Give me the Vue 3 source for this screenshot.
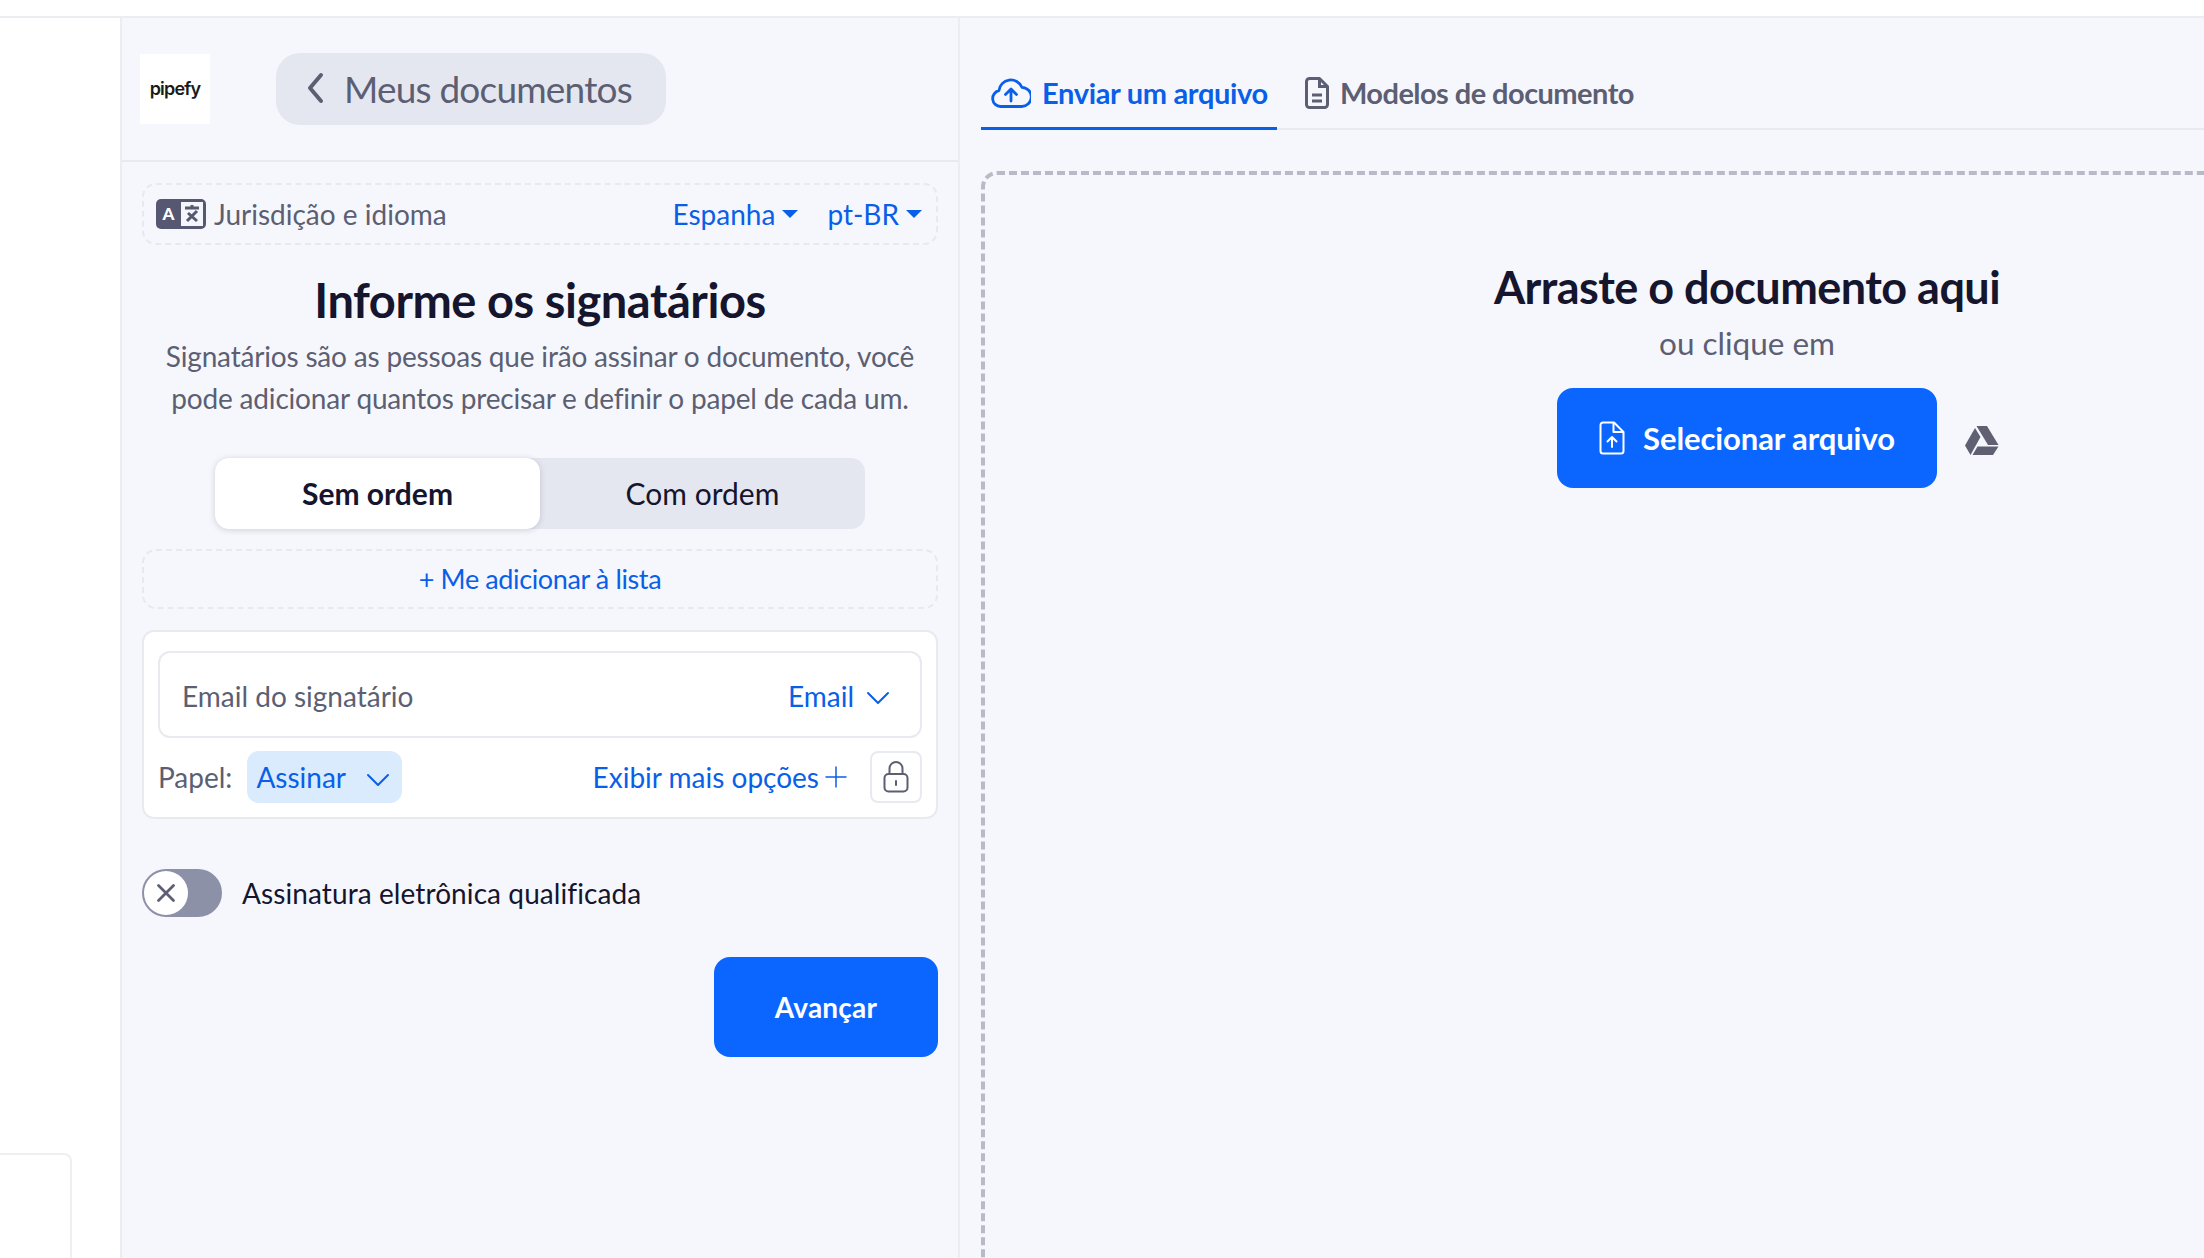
<script setup>
import { ref } from "vue";

const mode = ref("none");
const tab = ref("upload");
</script>

<template>
  <div class="page">
    <div class="topbar"></div>
    <div class="main">
      <aside class="sidebar">
        <div class="side-card"></div>
      </aside>

      <section class="panel">
        <header class="panel-head">
          <div class="logo">pipefy</div>
          <button class="back">
            <svg width="22" height="34" viewBox="0 0 22 34" fill="none">
              <path d="M17 4 6 17l11 13" stroke="#5c5f73" stroke-width="4" stroke-linecap="round" stroke-linejoin="round" />
            </svg>
            Meus documentos
          </button>
        </header>

        <div class="panel-body">
          <div class="jurisdiction">
            <svg class="translate" width="50" height="30" viewBox="0 0 50 30">
              <rect width="50" height="30" rx="5" fill="#555870" />
              <rect x="25" y="3" width="22" height="24" fill="#f5f6fb" />
              <text x="12.5" y="21" text-anchor="middle" font-family="Lato" font-weight="900" font-size="17" fill="#fff">A</text>
              <path d="M29 9h14M36 6v3M31 22l10-10M32 14l9 8" stroke="#555870" stroke-width="3" fill="none" />
            </svg>
            <span class="jur-label">Jurisdição e idioma</span>
            <span class="jur-select">Espanha<i class="caret"></i></span>
            <span class="jur-select second">pt-BR<i class="caret"></i></span>
          </div>

          <h1>Informe os signatários</h1>
          <p class="intro">
            Signatários são as pessoas que irão assinar o documento, você<br />
            pode adicionar quantos precisar e definir o papel de cada um.
          </p>

          <div class="segment">
            <button :class="{ on: mode === 'none' }" @click="mode = 'none'">Sem ordem</button>
            <button :class="{ on: mode === 'order' }" @click="mode = 'order'">Com ordem</button>
          </div>

          <div class="add-me">+ Me adicionar à lista</div>

          <div class="signer">
            <div class="email-field">
              <span class="placeholder">Email do signatário</span>
              <span class="email-type">
                Email
                <svg class="chev" width="24" height="14" viewBox="0 0 24 14" fill="none">
                  <path d="m2 2 10 10L22 2" stroke="#0a5fe8" stroke-width="2" stroke-linecap="round" stroke-linejoin="round" />
                </svg>
              </span>
            </div>
            <div class="role-row">
              <span class="role-label">Papel:</span>
              <span class="role-chip">
                Assinar
                <svg class="chev" width="24" height="14" viewBox="0 0 24 14" fill="none">
                  <path d="m2 2 10 10L22 2" stroke="#0a5fe8" stroke-width="2" stroke-linecap="round" stroke-linejoin="round" />
                </svg>
              </span>
              <span class="more">
                Exibir mais opções
                <svg width="24" height="24" viewBox="0 0 24 24" fill="none">
                  <path d="M12 2v20M2 12h20" stroke="#0a5fe8" stroke-width="1.500" stroke-linecap="round" />
                </svg>
              </span>
              <span class="lock">
                <svg width="26" height="32" viewBox="0 0 26 32" fill="none">
                  <path d="M6.5 13V7.500a6.500 6.500 0 0 1 13 0V13" stroke="#5c5f73" stroke-width="2" />
                  <rect x="1.500" y="13" width="23" height="17.500" rx="4" stroke="#5c5f73" stroke-width="2" />
                  <path d="M13 20v4" stroke="#5c5f73" stroke-width="2" stroke-linecap="round" />
                </svg>
              </span>
            </div>
          </div>

          <div class="qualified">
            <span class="toggle">
              <span class="knob">
                <svg width="20" height="20" viewBox="0 0 20 20" fill="none">
                  <path d="m2.500 2.500 15 15M17.500 2.500l-15 15" stroke="#5c5f73" stroke-width="2.800" stroke-linecap="round" />
                </svg>
              </span>
            </span>
            <span>Assinatura eletrônica qualificada</span>
          </div>

          <div class="actions">
            <button class="next">Avançar</button>
          </div>
        </div>
      </section>

      <section class="content">
        <nav class="tabs">
          <button class="tab" :class="{ active: tab === 'upload' }" @click="tab = 'upload'">
            <svg width="40" height="30" viewBox="0 0 40 30" fill="none">
              <path d="M11 28.500H9.500a8 8 0 0 1-1.600-15.800 12 12 0 0 1 23-3.400 9.600 9.600 0 0 1-.4 19.200H11Z" stroke="#0a5fe8" stroke-width="2.800" stroke-linejoin="round" />
              <path d="M20 23V11.500M14.500 16.500l5.500-5.500 5.500 5.500" stroke="#0a5fe8" stroke-width="2.800" stroke-linecap="round" stroke-linejoin="round" />
            </svg>
            Enviar um arquivo
          </button>
          <button class="tab models" :class="{ active: tab === 'models' }" @click="tab = 'models'">
            <svg width="24" height="32" viewBox="0 0 24 32" fill="none">
              <path d="M4.500 1.500h10L22.500 9.500v18a3 3 0 0 1-3 3h-15a3 3 0 0 1-3-3v-23a3 3 0 0 1 3-3Z" stroke="#5c5f73" stroke-width="3" stroke-linejoin="round" />
              <path d="M14.500 2v7.500h7.500M7 18h10M7 24h10" stroke="#5c5f73" stroke-width="3" />
            </svg>
            Modelos de documento
          </button>
        </nav>

        <div class="dropzone">
          <h2>Arraste o documento aqui</h2>
          <p>ou clique em</p>
          <div class="pick-row">
            <button class="pick">
              <svg width="26" height="34" viewBox="0 0 26 34" fill="none">
                <path d="M4 1.500h11l9.500 9.500v19a2.500 2.500 0 0 1-2.500 2.500H4A2.500 2.500 0 0 1 1.500 30V4A2.500 2.500 0 0 1 4 1.500Z" stroke="#fff" stroke-width="2" stroke-linejoin="round" />
                <path d="M14.500 2v9h9.500M13 26V16M8.500 20.500 13 16l4.500 4.500" stroke="#fff" stroke-width="2" stroke-linecap="round" stroke-linejoin="round" />
              </svg>
              Selecionar arquivo
            </button>
            <svg class="drive" width="34" height="29" viewBox="0 0 34 29">
              <path d="M11.500 0h10.500l11.500 19H23L11.500 0Z" fill="#5f6173" />
              <path d="M10 2 0 19.500 5.500 29l10-18L10 2Z" fill="#5f6173" />
              <path d="M12.500 20.500h21L28 29H7.500l5-8.500Z" fill="#5f6173" />
            </svg>
          </div>
        </div>
      </section>
    </div>
  </div>
</template>

<style>
html,
body {
  margin: 0;
  height: 100%;
  overflow: hidden;
  background: #fff;
}
</style>

<style scoped>
.page {
  width: 2204px;
  height: 1258px;
  display: flex;
  flex-direction: column;
  overflow: hidden;
  font-family: Lato, "Liberation Sans", sans-serif;
  color: #15152e;
}
button {
  font-family: inherit;
  border: none;
  cursor: pointer;
}
.topbar {
  height: 16px;
  flex: none;
  background: #fff;
  border-bottom: 2px solid #ecedf1;
}
.main {
  flex: 1;
  display: flex;
  min-height: 0;
}

/*----------------------------
* sidebar
*----------------------------*/
.sidebar {
  width: 120px;
  flex: none;
  background: #fff;
  border-right: 2px solid #ecedf1;
  display: flex;
  flex-direction: column;
  justify-content: flex-end;
}
.side-card {
  width: 70px;
  height: 103px;
  border: 2px solid #efeff3;
  border-left: none;
  border-bottom: none;
  border-top-right-radius: 8px;
}

/*----------------------------
* left panel
*----------------------------*/
.panel {
  width: 836px;
  flex: none;
  background: #f6f7fc;
  border-right: 2px solid #ecedf1;
}
.panel-head {
  height: 142px;
  border-bottom: 2px solid #e9eaf0;
  display: flex;
  align-items: center;
  padding-left: 18px;
  gap: 66px;
}
.logo {
  width: 70px;
  height: 70px;
  box-sizing: border-box;
  padding-bottom: 2px;
  background: #fff;
  display: flex;
  align-items: center;
  justify-content: center;
  font-family: Inter, sans-serif;
  font-weight: 600;
  font-size: 18px;
  letter-spacing: -0.8px;
  color: #1a1a1a;
}
.back {
  width: 390px;
  height: 72px;
  border-radius: 24px;
  background: #e5e7f0;
  color: #5c5f73;
  font-size: 37px;
  letter-spacing: -0.8px;
  display: flex;
  align-items: center;
  gap: 18px;
  padding: 0 0 2px 28px;
}
.panel-body {
  padding: 21px 20px 0;
}
.jurisdiction {
  height: 62px;
  box-sizing: border-box;
  border: 2px dashed #e8e9f0;
  border-radius: 14px;
  display: flex;
  align-items: center;
  padding: 0 14px 0 12px;
  font-size: 28px;
}
.translate {
  margin-right: 8px;
}
.jur-label {
  color: #5c5f73;
  flex: 1;
}
.jur-select {
  color: #0a5fe8;
  display: flex;
  align-items: center;
  gap: 7px;
}
.jur-select.second {
  margin-left: 29px;
}
.caret {
  width: 0;
  height: 0;
  border-left: 8px solid transparent;
  border-right: 8px solid transparent;
  border-top: 8px solid #0a5fe8;
}
h1 {
  margin: 28px 0 0;
  height: 54px;
  line-height: 54px;
  text-align: center;
  font-size: 47px;
  letter-spacing: -0.45px;
  font-weight: 700;
  color: #15152e;
}
.intro {
  margin: 8px 0 0;
  text-align: center;
  font-size: 28px;
  letter-spacing: -0.18px;
  line-height: 42px;
  color: #5c5f73;
}
.segment {
  margin: 39px auto 0;
  width: 650px;
  height: 71px;
  background: #e5e7f0;
  border-radius: 14px;
  display: grid;
  grid-template-columns: 1fr 1fr;
}
.segment button {
  background: transparent;
  font-size: 30px;
  border-radius: 14px;
  color: #15152e;
  padding: 0 0 2px;
}
.segment button.on {
  background: #fff;
  font-weight: 700;
  box-shadow: 0 1px 6px rgba(30, 30, 60, 0.18);
}
.add-me {
  margin-top: 20px;
  height: 60px;
  box-sizing: border-box;
  border: 2px dashed #e8e9f0;
  border-radius: 14px;
  padding-bottom: 2px;
  display: flex;
  align-items: center;
  justify-content: center;
  color: #0a5fe8;
  font-size: 27px;
  letter-spacing: -0.38px;
}
.signer {
  margin-top: 21px;
  height: 189px;
  box-sizing: border-box;
  background: #fff;
  border: 2px solid #e9eaf0;
  border-radius: 12px;
  padding: 19px 14px 0;
}
.email-field {
  height: 87px;
  box-sizing: border-box;
  border: 2px solid #e9eaf0;
  border-radius: 12px;
  padding: 2px 30px 0 22px;
  display: flex;
  align-items: center;
  justify-content: space-between;
  font-size: 28px;
}
.placeholder {
  color: #5c5f73;
}
.email-type {
  color: #0a5fe8;
  display: flex;
  align-items: center;
  gap: 12px;
}
.chev {
  margin-top: 5px;
}
.role-row {
  margin-top: 13px;
  height: 52px;
  display: flex;
  align-items: center;
  font-size: 28px;
}
.role-label {
  color: #5c5f73;
  margin-right: 15px;
}
.role-chip {
  width: 155px;
  height: 52px;
  box-sizing: border-box;
  background: #d9ebfd;
  border-radius: 12px;
  color: #0a5fe8;
  display: flex;
  align-items: center;
  justify-content: space-between;
  padding: 0 12px 0 9px;
}
.more {
  margin-left: auto;
  color: #0a5fe8;
  display: flex;
  align-items: center;
  gap: 5px;
}
.lock {
  margin-left: 22px;
  width: 52px;
  height: 52px;
  box-sizing: border-box;
  border: 2px solid #e9eaf0;
  border-radius: 8px;
  display: flex;
  align-items: center;
  justify-content: center;
}
.qualified {
  margin-top: 50px;
  height: 48px;
  display: flex;
  align-items: center;
  gap: 20px;
  font-size: 28px;
  letter-spacing: 0.09px;
  color: #15152e;
}
.toggle {
  width: 80px;
  height: 48px;
  box-sizing: border-box;
  border-radius: 24px;
  background: #8d91a8;
  border: 2px solid #8d91a8;
  display: flex;
}
.knob {
  width: 44px;
  height: 44px;
  border-radius: 50%;
  background: #fff;
  display: flex;
  align-items: center;
  justify-content: center;
}
.actions {
  margin-top: 40px;
  display: flex;
  justify-content: flex-end;
}
.next {
  width: 224px;
  height: 100px;
  border-radius: 16px;
  background: #0a66ff;
  color: #fff;
  font-size: 28px;
  letter-spacing: 0.2px;
  font-weight: 700;
}

/*----------------------------
* right side
*----------------------------*/
.content {
  flex: 1;
  min-width: 0;
  background: #f6f7fc;
  padding-left: 21px;
  overflow: hidden;
}
.tabs {
  height: 112px;
  box-sizing: border-box;
  border-bottom: 2px solid #e9eaf0;
  display: flex;
  align-items: flex-end;
  gap: 18px;
}
.tab {
  height: 72px;
  margin-bottom: -2px;
  padding: 0 9px 0 10px;
  background: transparent;
  border-bottom: 3px solid transparent;
  color: #5c5f73;
  font-size: 29px;
  letter-spacing: -0.33px;
  font-weight: 700;
  display: flex;
  align-items: center;
  gap: 11px;
}
.tab.models {
  letter-spacing: -0.55px;
}
.tab.active {
  color: #0a5fe8;
  border-bottom-color: #0a5fe8;
}
.dropzone {
  margin-top: 41px;
  width: 1532px;
  height: 1200px;
  box-sizing: border-box;
  border: 4px dashed #b9bac8;
  border-radius: 16px;
  padding-top: 82px;
  display: flex;
  flex-direction: column;
  align-items: center;
}
.dropzone h2 {
  margin: 0;
  font-size: 45px;
  letter-spacing: -0.54px;
  line-height: 60px;
  font-weight: 700;
  color: #15152e;
}
.dropzone p {
  margin: 3px 0 0;
  font-size: 31.5px;
  line-height: 46px;
  color: #5c5f73;
}
.pick-row {
  margin-top: 22px;
  position: relative;
  display: flex;
}
.pick {
  width: 380px;
  height: 100px;
  border-radius: 16px;
  background: #0a66ff;
  color: #fff;
  font-size: 31px;
  letter-spacing: -0.1px;
  font-weight: 700;
  display: flex;
  align-items: center;
  justify-content: center;
  gap: 18px;
}
.drive {
  position: absolute;
  left: 408px;
  top: 38px;
}
</style>
